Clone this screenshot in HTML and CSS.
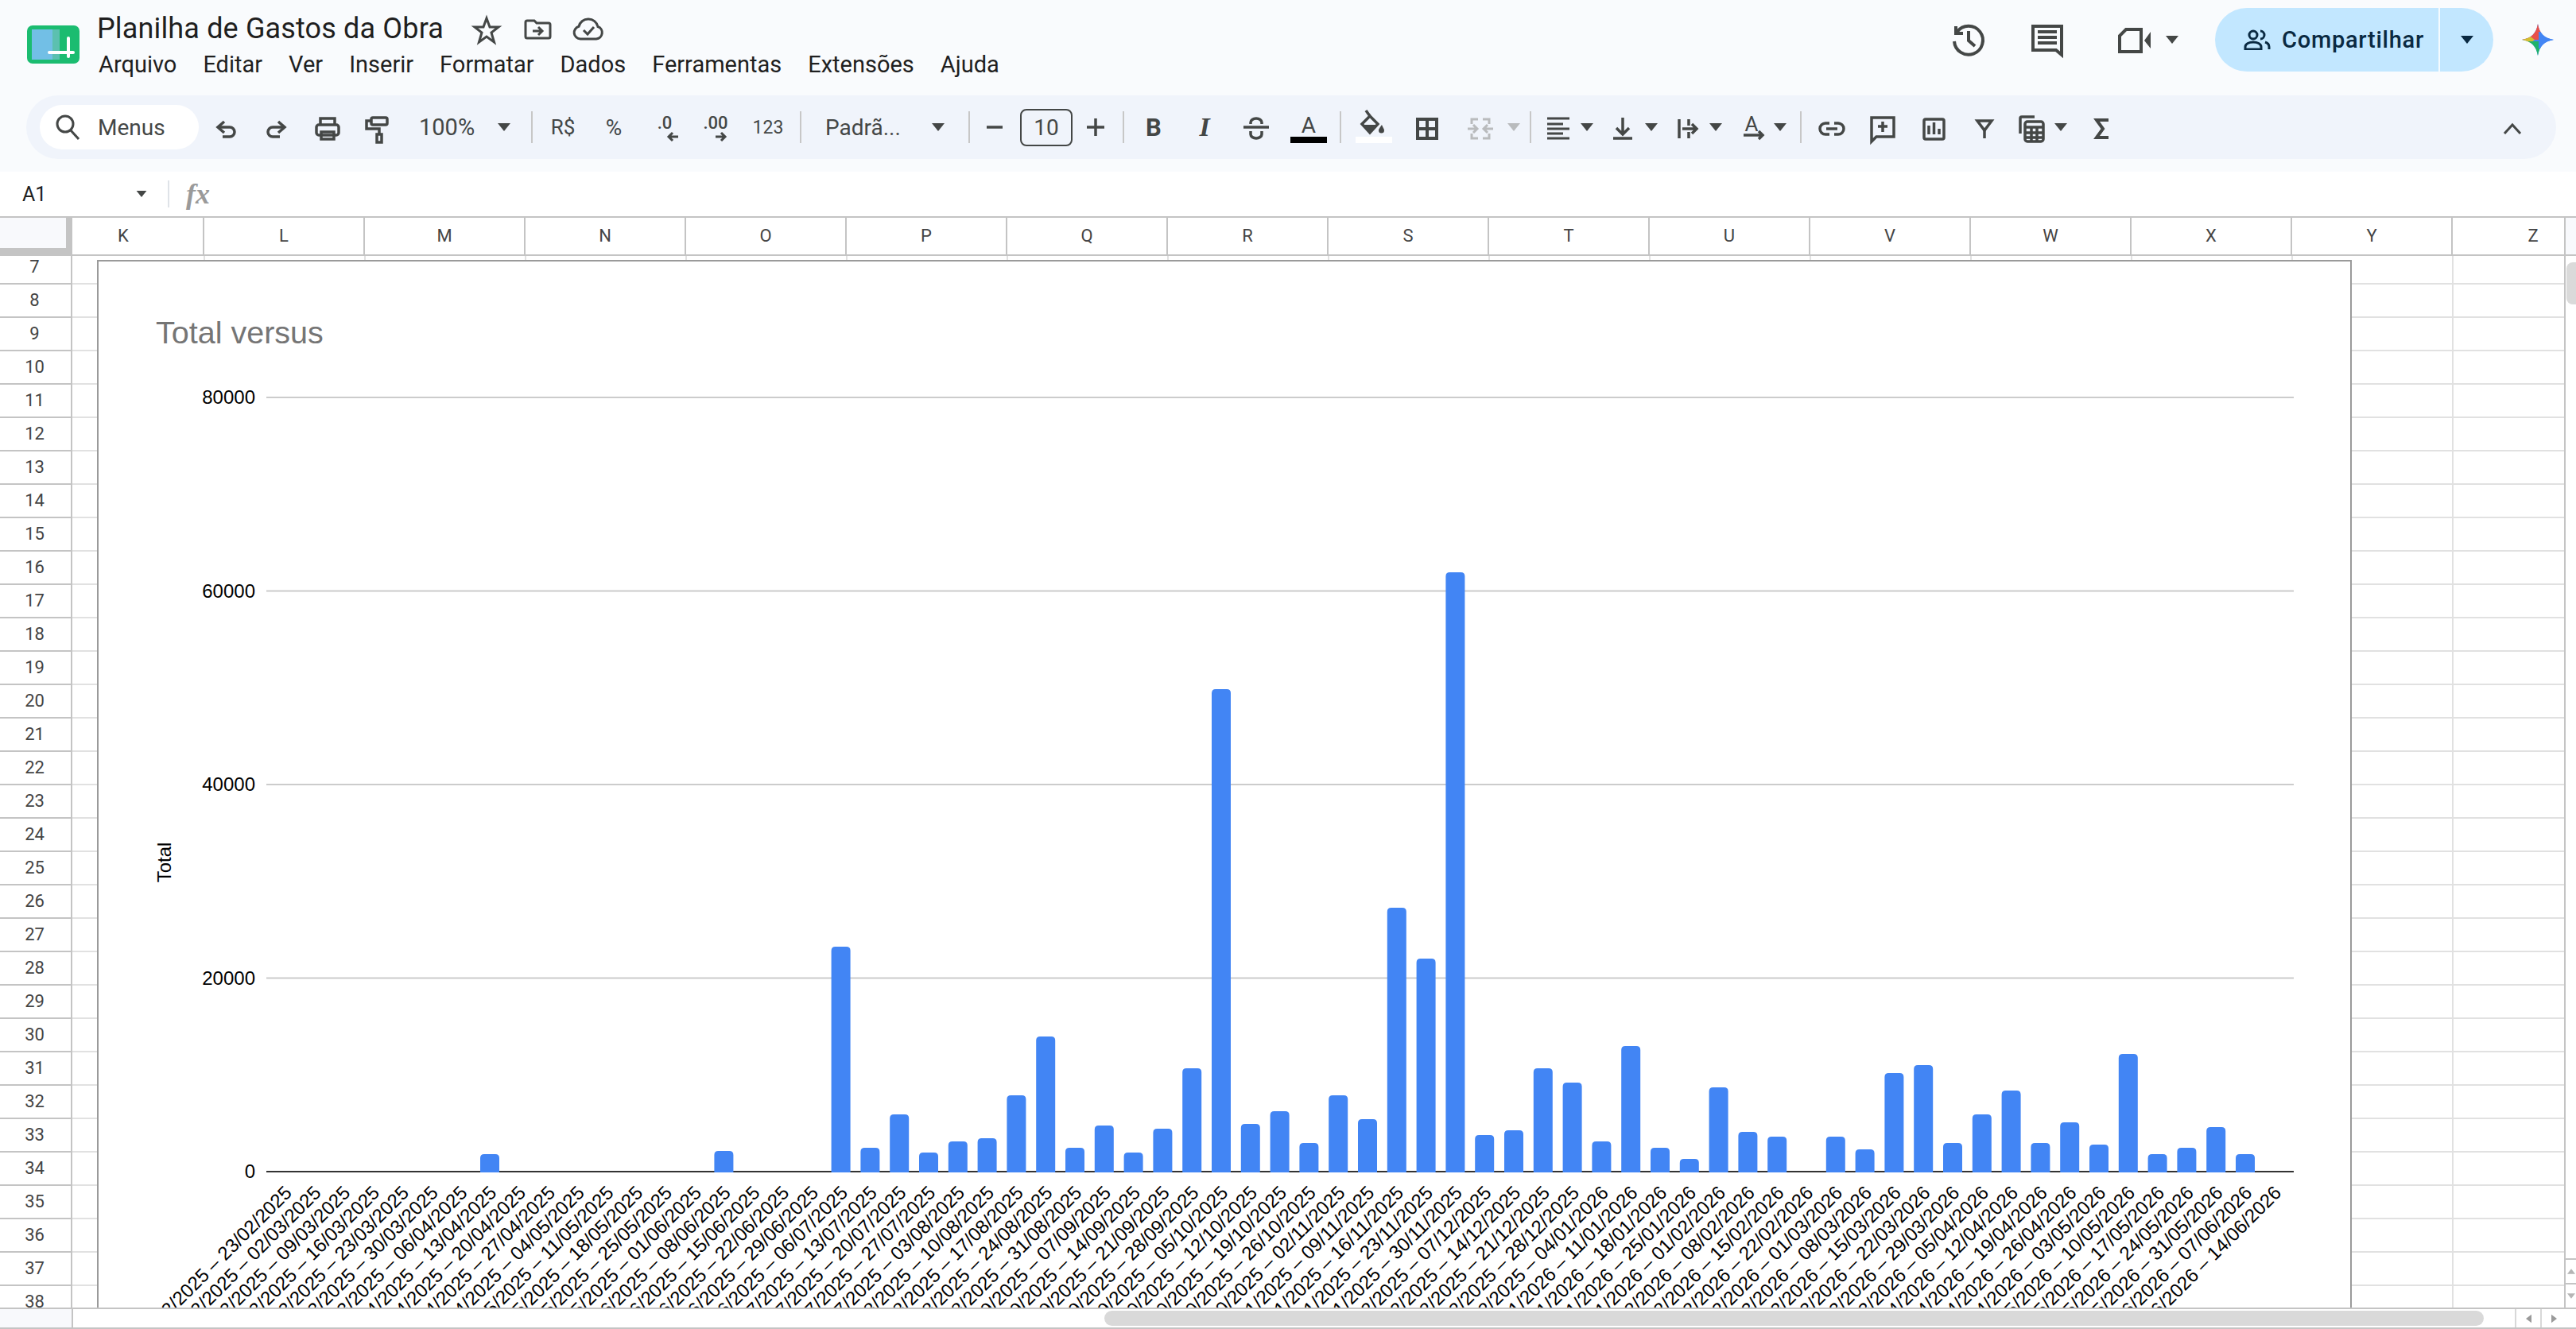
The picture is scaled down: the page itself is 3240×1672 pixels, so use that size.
FILE: index.html
```html
<!DOCTYPE html>
<html lang="pt-BR">
<head>
    <meta charset="UTF-8">
    <title>Planilha de Gastos da Obra</title>
    <link rel="stylesheet" href="styles.css">
</head>
<body>
    <header class="app-header">
        <div class="top-bar">
            <svg class="logo" viewBox="0 0 66 48">
                <rect x="0" y="0" width="66" height="48" rx="7" fill="#1bbc70"/>
                <rect x="6" y="5" width="26" height="38" fill="#72bfe6"/>
                <rect x="32" y="5" width="9" height="38" fill="#5cc0b0"/>
                <rect x="26" y="32" width="34" height="4" rx="2" fill="#fff"/>
                <rect x="50" y="14" width="4" height="27" rx="2" fill="#fff"/>
            </svg>
            <div class="doc-info">
                <div class="title-row">
                    <span class="doc-title">Planilha de Gastos da Obra</span>
                    <div class="title-icons">
                        <svg class="ico ico-thin" viewBox="0 0 48 48"><path d="M24 11l4 11h11l-9 7 3.500 12-9.500-7-9.500 7 3.500-12-9-7h11z"/></svg>
                        <svg class="ico ico-thin" viewBox="0 0 48 48"><path d="M11 14h9l3 3h15a2 2 0 0 1 2 2v15a2 2 0 0 1-2 2H11a2 2 0 0 1-2-2V16a2 2 0 0 1 2-2z"/><path d="M18 27h12M25 22l5 5-5 5"/></svg>
                        <svg class="ico ico-thin" viewBox="0 0 48 48"><path d="M14 37a8 8 0 0 1-2-15.700A12 12 0 0 1 24 12a12 12 0 0 1 12 9.500A8 8 0 0 1 34 37z"/><path d="M18 26l5 5 8-9"/></svg>
                    </div>
                </div>
                <nav class="menu-row">
                    <span>Arquivo</span>
                    <span>Editar</span>
                    <span>Ver</span>
                    <span>Inserir</span>
                    <span>Formatar</span>
                    <span>Dados</span>
                    <span>Ferramentas</span>
                    <span>Extensões</span>
                    <span>Ajuda</span>
                </nav>
            </div>
            <div class="top-actions">
                <svg class="ico ico-bold" viewBox="0 0 48 48"><path d="M6 26a18 18 0 1 0 3.500-12"/><path d="M8 7v9h9"/><path d="M24 13v12l8 7"/></svg>
                <svg class="ico ico-bold act-comment" viewBox="0 0 48 48"><path d="M6 7h36v36l-7-6H6z"/><path d="M12 14h24M12 21h24M12 28h24"/></svg>
                <svg class="ico ico-bold act-meet" viewBox="0 0 48 48"><path d="M14 11h19v28H6V19z"/><path class="solid" d="M37 25l8-11v21z"/></svg>
                <svg class="caret act-meet-caret" viewBox="0 0 20 10"><path d="M2 0h16l-8 10z"/></svg>
                <div class="share">
                    <div class="share-main">
                        <svg class="share-ico" viewBox="0 0 36 26"><circle cx="13" cy="7" r="5"/><path d="M3 25v-3c0-4 5-6 10-6s10 2 10 6v3z"/><path d="M22 2a5 5 0 0 1 0 10M28 16c3 1 5 3 5 6v3"/></svg>
                        <span>Compartilhar</span>
                    </div>
                    <div class="share-more"><svg class="caret caret-share" viewBox="0 0 20 10"><path d="M2 0h16l-8 10z"/></svg></div>
                </div>
                <svg class="gemini" viewBox="0 0 40 40">
                    <clipPath id="geminiStar"><path d="M20 0C22 12 28 18 40 20 28 22 22 28 20 40 18 28 12 22 0 20 12 18 18 12 20 0z"/></clipPath>
                    <g clip-path="url(#geminiStar)">
                        <rect width="40" height="40" fill="#4285f4"/>
                        <path d="M0 0h24v20H0z" fill="#e8504a"/>
                        <path d="M0 8l16 12L0 32z" fill="#d4bf2e"/>
                        <path d="M0 40V22h24v18z" fill="#1fb36a"/>
                        <path d="M21 10h19v21H21z" fill="#4285f4"/>
                    </g>
                </svg>
            </div>
        </div>

        <div class="toolbar">
            <div class="search-pill">
                <svg class="search-ico" viewBox="0 0 36 36"><circle cx="15" cy="14" r="10"/><path d="M22 22l10 11"/></svg>
                <span>Menus</span>
            </div>
            <div class="btn btn-first"><svg class="ico" viewBox="0 0 48 48"><path d="M22 17l-8 7 8 7"/><path d="M15 24h14a6 6 0 0 1 0 12H20"/></svg></div>
            <div class="btn"><svg class="ico" viewBox="0 0 48 48"><path d="M26 17l8 7-8 7"/><path d="M33 24H19a6 6 0 0 0 0 12h9"/></svg></div>
            <div class="btn"><svg class="ico" viewBox="0 0 48 48"><path d="M15 22v-9h18v9"/><rect x="10" y="21" width="28" height="13" rx="3"/><rect x="16" y="30" width="16" height="9"/></svg></div>
            <div class="btn"><svg class="ico" viewBox="0 0 48 48"><rect x="15" y="12" width="20" height="9" rx="2"/><path d="M15 16H9v10h16v7"/><rect x="22" y="33" width="6" height="10"/></svg></div>
            <div class="zoom-select"><span>100%</span><svg class="caret" viewBox="0 0 20 10"><path d="M2 0h16l-8 10z"/></svg></div>
            <div class="sep"></div>
            <div class="btn txt-btn txt-currency">R$</div>
            <div class="btn txt-btn txt-percent">%</div>
            <div class="btn"><svg class="ico" viewBox="0 0 48 48"><text class="ico-text" x="24" y="26" text-anchor="middle">.0</text><path class="ico-arrow" d="M41 36H29M34 31l-5 5 5 5"/></svg></div>
            <div class="btn"><svg class="ico" viewBox="0 0 48 48"><text class="ico-text" x="24" y="26" text-anchor="middle">.00</text><path class="ico-arrow" d="M24 36h12M31 31l5 5-5 5"/></svg></div>
            <div class="btn txt-btn txt-number">123</div>
            <div class="sep"></div>
            <div class="font-select"><span>Padrã...</span><svg class="caret" viewBox="0 0 20 10"><path d="M2 0h16l-8 10z"/></svg></div>
            <div class="sep"></div>
            <div class="btn btn-minus"><svg class="ico" viewBox="0 0 48 48"><path d="M14 24h20"/></svg></div>
            <div class="size-box">10</div>
            <div class="btn btn-plus"><svg class="ico" viewBox="0 0 48 48"><path d="M13 24h22M24 13v22"/></svg></div>
            <div class="sep"></div>
            <div class="btn btn-bold">B</div>
            <div class="btn btn-italic">I</div>
            <div class="btn"><svg class="ico" viewBox="0 0 48 48"><path d="M8 24h32"/><path d="M17 20v-2a7 5 0 0 1 14 0v2"/><path d="M17 29v4a7 5 0 0 0 14 0v-4"/></svg></div>
            <div class="btn btn-color">
                <svg class="ico" viewBox="0 0 48 48"><text class="ico-letter" x="24" y="31" text-anchor="middle">A</text><rect class="swatch" x="1" y="36" width="46" height="8"/></svg>
            </div>
            <div class="sep"></div>
            <div class="btn btn-fill">
                <svg class="ico" viewBox="0 0 48 48"><path d="M14 3l5 7"/><path d="M9 20l10-10 10 10-10 11z"/><path class="solid" d="M9 21h20l-10 10z"/><path class="solid" d="M34 21c-2 3-4 5-4 7a3.500 3.500 0 0 0 7 0c0-2-2-4-3-7z"/><rect class="swatch-white" x="1" y="36" width="46" height="8"/></svg>
            </div>
            <div class="btn"><svg class="ico ico-bold" viewBox="0 0 48 48"><rect x="12" y="14" width="24" height="24"/><path d="M24 14v24M12 26h24"/></svg></div>
            <div class="dd dd-merge">
                <svg class="ico ico-off" viewBox="0 0 48 48"><path d="M21 14h-8v6M13 32v6h8M27 14h8v6M35 32v6h-8"/><path d="M8 26h12M15 21l5 5-5 5M40 26H28M33 21l-5 5 5 5"/></svg>
                <svg class="caret caret-off" viewBox="0 0 20 10"><path d="M2 0h16l-8 10z"/></svg>
            </div>
            <div class="sep"></div>
            <div class="dd dd-first">
                <svg class="ico ico-lines" viewBox="0 0 48 48"><path d="M10 13h28M10 20h20M10 26h28M10 32h20M10 38h28"/></svg>
                <svg class="caret" viewBox="0 0 20 10"><path d="M2 0h16l-8 10z"/></svg>
            </div>
            <div class="dd">
                <svg class="ico" viewBox="0 0 48 48"><path d="M24 12v20M16 25l8 8 8-8M12 38h24"/></svg>
                <svg class="caret" viewBox="0 0 20 10"><path d="M2 0h16l-8 10z"/></svg>
            </div>
            <div class="dd">
                <svg class="ico" viewBox="0 0 48 48"><path d="M14 14v24M26 14v8M26 30v8M18 26h18M30 20l6 6-6 6"/></svg>
                <svg class="caret" viewBox="0 0 20 10"><path d="M2 0h16l-8 10z"/></svg>
            </div>
            <div class="dd dd-last">
                <svg class="ico" viewBox="0 0 48 48"><text class="ico-letter ico-letter-sm" x="24" y="29" text-anchor="middle">A</text><path d="M14 34h24M33 29l5 5-5 5"/></svg>
                <svg class="caret" viewBox="0 0 20 10"><path d="M2 0h16l-8 10z"/></svg>
            </div>
            <div class="sep"></div>
            <div class="btn"><svg class="ico" viewBox="0 0 48 48"><path d="M21 19h-5a7 7 0 0 0 0 14h5M27 19h5a7 7 0 0 1 0 14h-5M17 26h14"/></svg></div>
            <div class="btn"><svg class="ico" viewBox="0 0 48 48"><path d="M10 12h28v24H16l-6 6z"/><path d="M24 17v13M18 23h12"/></svg></div>
            <div class="btn"><svg class="ico" viewBox="0 0 48 48"><rect x="12" y="14" width="25" height="25" rx="2"/><path d="M18 22v11M24.500 18v15M31 26v7"/></svg></div>
            <div class="btn"><svg class="ico" viewBox="0 0 48 48"><path d="M15 16h18l-9 12z"/><path d="M24 28v10"/></svg></div>
            <div class="dd dd-first">
                <svg class="ico" viewBox="0 0 48 48"><path d="M9 32V13a2 2 0 0 1 2-2h16"/><rect x="15" y="17" width="23" height="25" rx="3"/><path d="M15 24h23M15 31h23M15 37h23M23 24v18M30 24v18"/></svg>
                <svg class="caret" viewBox="0 0 20 10"><path d="M2 0h16l-8 10z"/></svg>
            </div>
            <svg class="ico ico-bold sigma" viewBox="0 0 48 48"><path d="M32 15H17l8 11-8 11h15"/></svg>
            <svg class="ico ico-chevron" viewBox="0 0 48 48"><path d="M14 32l10-11 10 11"/></svg>
        </div>
    </header>

    <div class="formula-bar">
        <span class="cell-name">A1</span>
        <svg class="caret caret-name" viewBox="0 0 20 10"><path d="M2 0h16l-8 10z"/></svg>
        <div class="formula-sep"></div>
        <span class="fx">fx</span>
    </div>

    <div class="col-heads">
        <div class="corner"></div>
        <div class="col col-k">K</div>
        <div class="col">L</div>
        <div class="col">M</div>
        <div class="col">N</div>
        <div class="col">O</div>
        <div class="col">P</div>
        <div class="col">Q</div>
        <div class="col">R</div>
        <div class="col">S</div>
        <div class="col">T</div>
        <div class="col">U</div>
        <div class="col">V</div>
        <div class="col">W</div>
        <div class="col">X</div>
        <div class="col">Y</div>
        <div class="col col-z">Z</div>
        <div class="corner-right"></div>
    </div>

    <div class="sheet-body">
        <div class="row-heads">
            <div>7</div><div>8</div><div>9</div><div>10</div><div>11</div><div>12</div><div>13</div><div>14</div>
            <div>15</div><div>16</div><div>17</div><div>18</div><div>19</div><div>20</div><div>21</div><div>22</div>
            <div>23</div><div>24</div><div>25</div><div>26</div><div>27</div><div>28</div><div>29</div><div>30</div>
            <div>31</div><div>32</div><div>33</div><div>34</div><div>35</div><div>36</div><div>37</div><div>38</div>
        </div>
        <div class="cells"></div>
        <div class="v-scroll">
            <div class="v-thumb"></div>
            <div class="v-arrow"><svg class="arrow-ico" viewBox="0 0 12 8"><path d="M6 0l6 8H0z"/></svg></div>
            <div class="v-arrow"><svg class="arrow-ico" viewBox="0 0 12 8"><path d="M0 0h12L6 8z"/></svg></div>
        </div>
        <div class="chart-box">
            <svg id="chart" class="chart-svg" viewBox="122 327 2836 1318"></svg>
        </div>
    </div>

    <div class="h-scroll">
        <div class="h-corner"></div>
        <div class="h-track"><div class="h-thumb"></div></div>
        <div class="h-arrow"><svg class="arrow-ico arrow-side" viewBox="0 0 8 12"><path d="M8 0v12L0 6z"/></svg></div>
        <div class="h-arrow"><svg class="arrow-ico arrow-side" viewBox="0 0 8 12"><path d="M0 0v12l8-6z"/></svg></div>
    </div>

    <script src="chart.js"></script>
</body>
</html>
```

FILE: styles.css
```css
html, body {
    margin: 0;
    height: 100%;
    overflow: hidden;
}
body {
    display: flex;
    flex-direction: column;
    width: 3240px;
    height: 1672px;
    background: #fff;
    font-family: Roboto, "Liberation Sans", sans-serif;
    color: #1f1f1f;
}

/* header */
.app-header {
    background: #f9fbfd;
    height: 216px;
    flex: none;
}
.top-bar {
    display: flex;
    height: 120px;
}
.logo {
    width: 66px;
    height: 48px;
    margin: 32px 22px 0 34px;
    flex: none;
}
.doc-info {
    padding-top: 14px;
}
.title-row {
    display: flex;
    align-items: center;
    height: 44px;
}
.doc-title {
    font-size: 36px;
    line-height: 44px;
    width: 466px;
    letter-spacing: 0.15px;
}
.title-icons {
    display: flex;
    gap: 16px;
}
.menu-row {
    display: flex;
    gap: 33px;
    margin-top: 3px;
    margin-left: 2px;
    font-size: 29px;
    line-height: 40px;
}
.top-actions {
    display: flex;
    align-items: center;
    margin-left: auto;
    height: 100px;
    padding-right: 28px;
}
.act-comment { margin-left: 51px; }
.act-meet { margin-left: 61px; }
.act-meet-caret { margin-left: 14px; }
.share {
    display: flex;
    width: 350px;
    height: 80px;
    margin-left: 44px;
    border-radius: 40px;
    background: #c2e7ff;
    color: #0a2a42;
    overflow: hidden;
}
.share-main {
    display: flex;
    align-items: center;
    width: 283px;
    padding-left: 35px;
    box-sizing: border-box;
    border-right: 2px solid #f4fbff;
    font-size: 29px;
    font-weight: 500;
    letter-spacing: 0.75px;
}
.share-main span {
    margin-left: 13px;
}
.share-ico {
    width: 36px;
    height: 26px;
    fill: none;
    stroke: #0a2a42;
    stroke-width: 3;
}
.share-more {
    flex: 1;
    display: flex;
    align-items: center;
    justify-content: center;
}
.gemini {
    width: 40px;
    height: 40px;
    margin-left: 36px;
}

/* icons */
.ico {
    width: 48px;
    height: 48px;
    flex: none;
    fill: none;
    stroke: #444746;
    stroke-width: 3.5;
}
.ico-thin { stroke-width: 3; }
.ico-bold { stroke-width: 4; }
.ico-off { stroke: #b9bbbd; stroke-width: 3; }
.ico-lines { stroke-width: 3; }
.ico .solid { fill: #444746; stroke: none; }
.ico-text {
    fill: #444746;
    stroke: none;
    font-size: 22px;
    font-weight: 500;
}
.ico-arrow { stroke-width: 3; }
.ico-letter {
    fill: #444746;
    stroke: none;
    font-size: 28px;
}
.ico-letter-sm { font-size: 26px; }
.swatch { fill: #000; stroke: none; }
.swatch-white { fill: #fff; stroke: none; }
.caret {
    width: 20px;
    height: 10px;
    flex: none;
    fill: #444746;
}
.caret-off { fill: #b9bbbd; margin-left: 8px; }
.caret-share { fill: #0a2a42; }

/* toolbar */
.toolbar {
    display: flex;
    align-items: center;
    height: 80px;
    margin: 0 25px 0 33px;
    padding-left: 17px;
    border-radius: 40px;
    background: #f0f4fb;
}
.search-pill {
    display: flex;
    align-items: center;
    flex: none;
    box-sizing: border-box;
    width: 200px;
    height: 56px;
    padding-left: 17px;
    border-radius: 28px;
    background: #fff;
    color: #444746;
    font-size: 28px;
}
.search-ico {
    width: 36px;
    height: 36px;
    fill: none;
    stroke: #444746;
    stroke-width: 3;
    margin-right: 20px;
}
.btn {
    display: flex;
    align-items: center;
    justify-content: center;
    flex: none;
    width: 64px;
    height: 48px;
    color: #444746;
}
.btn-first { margin-left: 2px; }
.txt-btn { font-size: 26px; }
.txt-percent { font-size: 28px; }
.txt-number { width: 68px; font-size: 23px; }
.zoom-select {
    display: flex;
    align-items: center;
    justify-content: space-between;
    flex: none;
    box-sizing: border-box;
    width: 154px;
    padding: 0 18px 0 19px;
    color: #444746;
    font-size: 29px;
}
.font-select {
    display: flex;
    align-items: center;
    justify-content: space-between;
    flex: none;
    box-sizing: border-box;
    width: 198px;
    padding: 0 22px 0 24px;
    color: #444746;
    font-size: 28px;
}
.sep {
    flex: none;
    width: 2px;
    height: 40px;
    margin: 0 6px;
    background: #c7c7c7;
}
.btn-minus { width: 50px; }
.btn-plus { width: 57px; }
.size-box {
    flex: none;
    box-sizing: border-box;
    width: 66px;
    height: 47px;
    margin-left: 7px;
    border: 2px solid #444746;
    border-radius: 8px;
    color: #444746;
    font-size: 28px;
    line-height: 43px;
    text-align: center;
}
.btn-bold { width: 62px; font-size: 31px; font-weight: 700; }
.btn-italic {
    width: 66px;
    font-family: "Liberation Serif", serif;
    font-size: 34px;
    font-weight: 700;
    font-style: italic;
}
.btn-color { width: 67px; }
.btn-fill { width: 70px; }
.dd {
    display: flex;
    align-items: center;
    flex: none;
    gap: 2px;
    margin-left: 11px;
}
.dd-first { margin-left: 4px; }
.dd-last { margin-right: 9px; }
.dd-merge { width: 80px; gap: 0; }
.sigma { margin-left: 18px; }
.ico-chevron {
    margin-left: auto;
    margin-right: 31px;
    stroke-width: 3;
}

/* formula bar */
.formula-bar {
    display: flex;
    align-items: center;
    flex: none;
    height: 56px;
    background: #fff;
}
.cell-name {
    width: 142px;
    padding-left: 28px;
    font-size: 25px;
}
.caret-name { width: 16px; height: 8px; }
.formula-sep {
    width: 2px;
    height: 34px;
    margin-left: 25px;
    background: #dfe3e8;
}
.fx {
    margin-left: 21px;
    color: #9a9a9a;
    font-family: "Liberation Serif", serif;
    font-size: 36px;
    font-style: italic;
    font-weight: 700;
}

/* sheet */
.col-heads {
    display: flex;
    flex: none;
    box-sizing: border-box;
    height: 50px;
    border-top: 2px solid #c4c4c4;
    border-bottom: 2px solid #c4c4c4;
    color: #444;
    font-size: 22px;
}
.corner {
    flex: none;
    box-sizing: border-box;
    width: 91px;
    border-right: 8px solid #c4c4c4;
    border-bottom: 8px solid #c4c4c4;
    background: #f8f9fc;
}
.col {
    flex: none;
    box-sizing: border-box;
    width: 202px;
    line-height: 46px;
    text-align: center;
    border-right: 2px solid #c4c4c4;
}
.col-k { width: 166px; padding-right: 36px; }
.col-z { width: 142px; padding-left: 62px; }
.corner-right {
    flex: 1;
    background: #f8f9fc;
}
.sheet-body {
    position: relative;
    display: flex;
    flex: 1;
    min-height: 0;
    overflow: hidden;
}
.row-heads {
    flex: none;
    box-sizing: border-box;
    width: 91px;
    margin-top: -6px;
    border-right: 2px solid #c4c4c4;
    color: #444;
    font-size: 22px;
    text-align: center;
}
.row-heads div {
    box-sizing: border-box;
    height: 42px;
    line-height: 40px;
    padding-right: 2px;
    border-bottom: 2px solid #c4c4c4;
}
.cells {
    flex: none;
    width: 3134px;
    background-image:
        linear-gradient(to left, #e1e1e1 2px, transparent 2px),
        linear-gradient(to top, #e1e1e1 2px, transparent 2px);
    background-size: 202px 100%, 100% 42px;
    background-position: -35px 0, 0 -6px;
}
.v-scroll {
    display: flex;
    flex-direction: column;
    flex: 1;
    box-sizing: border-box;
    border-left: 2px solid #c4c4c4;
}
.v-thumb {
    height: 53px;
    margin: 8px 0 0 1px;
    border-radius: 8px 0 0 8px;
    background: #dadada;
}
.v-arrow {
    display: flex;
    align-items: center;
    justify-content: center;
    box-sizing: border-box;
    height: 31px;
    border-top: 2px solid #c4c4c4;
}
.v-thumb + .v-arrow { margin-top: auto; }
.arrow-ico {
    width: 10px;
    height: 7px;
    fill: #b5b5b5;
}
.arrow-side { width: 7px; height: 12px; fill: #9a9a9a; }

/* chart sits on top of the cells */
.chart-box {
    position: absolute;
    left: 122px;
    top: 5px;
    box-sizing: border-box;
    width: 2836px;
    height: 1400px;
    border: 2px solid #9a9a9a;
    background: #fff;
}
.chart-svg {
    position: absolute;
    left: -2px;
    top: -2px;
    width: 2836px;
    height: 1318px;
    font-family: "Liberation Sans", Arial, sans-serif;
}
.chart-title { fill: #757575; font-size: 39.5px; }
.chart-tick { fill: #000; font-size: 24px; }
.chart-grid { stroke: #ccc; stroke-width: 2; }
.chart-axis { stroke: #333; stroke-width: 2; }
.chart-bar { fill: #4285f4; }

/* bottom scroll strip */
.h-scroll {
    display: flex;
    flex: none;
    box-sizing: border-box;
    height: 27px;
    border-top: 2px solid #c4c4c4;
    border-bottom: 2px solid #c4c4c4;
}
.h-corner {
    flex: none;
    box-sizing: border-box;
    width: 92px;
    border-right: 2px solid #c4c4c4;
    background: #f8f9fc;
}
.h-track {
    flex: none;
    width: 3071px;
}
.h-thumb {
    height: 19px;
    width: 1735px;
    margin: 2px 0 0 1297px;
    border-radius: 10px;
    background: #d9d9d9;
}
.h-arrow {
    display: flex;
    align-items: center;
    justify-content: center;
    flex: none;
    box-sizing: border-box;
    width: 32px;
    border-left: 2px solid #d8d8d8;
}
```

FILE: chart.js
```js
const svgNS = 'http://www.w3.org/2000/svg';
const chart = document.getElementById('chart');

const PLOT_LEFT = 335;
const PLOT_RIGHT = 2885;
const ZERO_Y = 1474;
const PX_PER_UNIT = 974 / 80000;
const BAR_WIDTH = 24;
const FIRST_CENTER = 358.4;
const STEP = 36.8;

// bar heights per week, in px on the plot
const heights = [
    0, 0, 0, 0, 0, 0, 0, 23, 0, 0, 0, 0, 0, 0, 0, 27, 0, 0, 0, 284,
    31, 73, 25, 39, 43, 97, 171, 31, 59, 25, 55, 131, 608, 61, 77, 37, 97, 67, 333, 269,
    755, 47, 53, 131, 113, 39, 159, 31, 17, 107, 51, 45, 0, 45, 29, 125, 135, 37, 73, 103,
    37, 63, 35, 149, 23, 31, 57, 23, 0
];

function add(name, attrs, text) {
    const el = document.createElementNS(svgNS, name);
    for (const key in attrs) el.setAttribute(key, attrs[key]);
    if (text !== undefined) el.textContent = text;
    chart.appendChild(el);
    return el;
}

function formatDate(date) {
    const day = String(date.getUTCDate()).padStart(2, '0');
    const month = String(date.getUTCMonth() + 1).padStart(2, '0');
    return `${day}/${month}/${date.getUTCFullYear()}`;
}

add('text', { class: 'chart-title', x: 196, y: 432 }, 'Total versus');
add('text', { class: 'chart-tick', x: 0, y: 0, transform: 'translate(215 1085) rotate(-90)', 'text-anchor': 'middle' }, 'Total');

[80000, 60000, 40000, 20000].forEach((value) => {
    const y = ZERO_Y - value * PX_PER_UNIT;
    add('line', { class: 'chart-grid', x1: PLOT_LEFT, x2: PLOT_RIGHT, y1: y, y2: y });
    add('text', { class: 'chart-tick', x: 321, y: y + 8, 'text-anchor': 'end' }, value);
});
add('line', { class: 'chart-axis', x1: PLOT_LEFT, x2: PLOT_RIGHT, y1: ZERO_Y, y2: ZERO_Y });
add('text', { class: 'chart-tick', x: 321, y: ZERO_Y + 8, 'text-anchor': 'end' }, 0);

heights.forEach((height, i) => {
    const center = FIRST_CENTER + STEP * i;
    const end = new Date(Date.UTC(2025, 1, 23 + 7 * i));
    const start = new Date(Date.UTC(2025, 1, 17 + 7 * i));

    if (height > 0) {
        const left = center - BAR_WIDTH / 2;
        const right = center + BAR_WIDTH / 2;
        const top = ZERO_Y + 1 - height;
        add('path', {
            class: 'chart-bar',
            d: `M${left} ${ZERO_Y + 1}V${top + 5}Q${left} ${top} ${left + 5} ${top}H${right - 5}Q${right} ${top} ${right} ${top + 5}V${ZERO_Y + 1}z`
        });
    }

    const x = center + 10;
    const y = 1502;
    add('text', {
        class: 'chart-tick',
        x: x,
        y: y,
        'text-anchor': 'end',
        transform: `rotate(-45 ${x} ${y})`
    }, `${formatDate(start)} – ${formatDate(end)}`);
});
```
